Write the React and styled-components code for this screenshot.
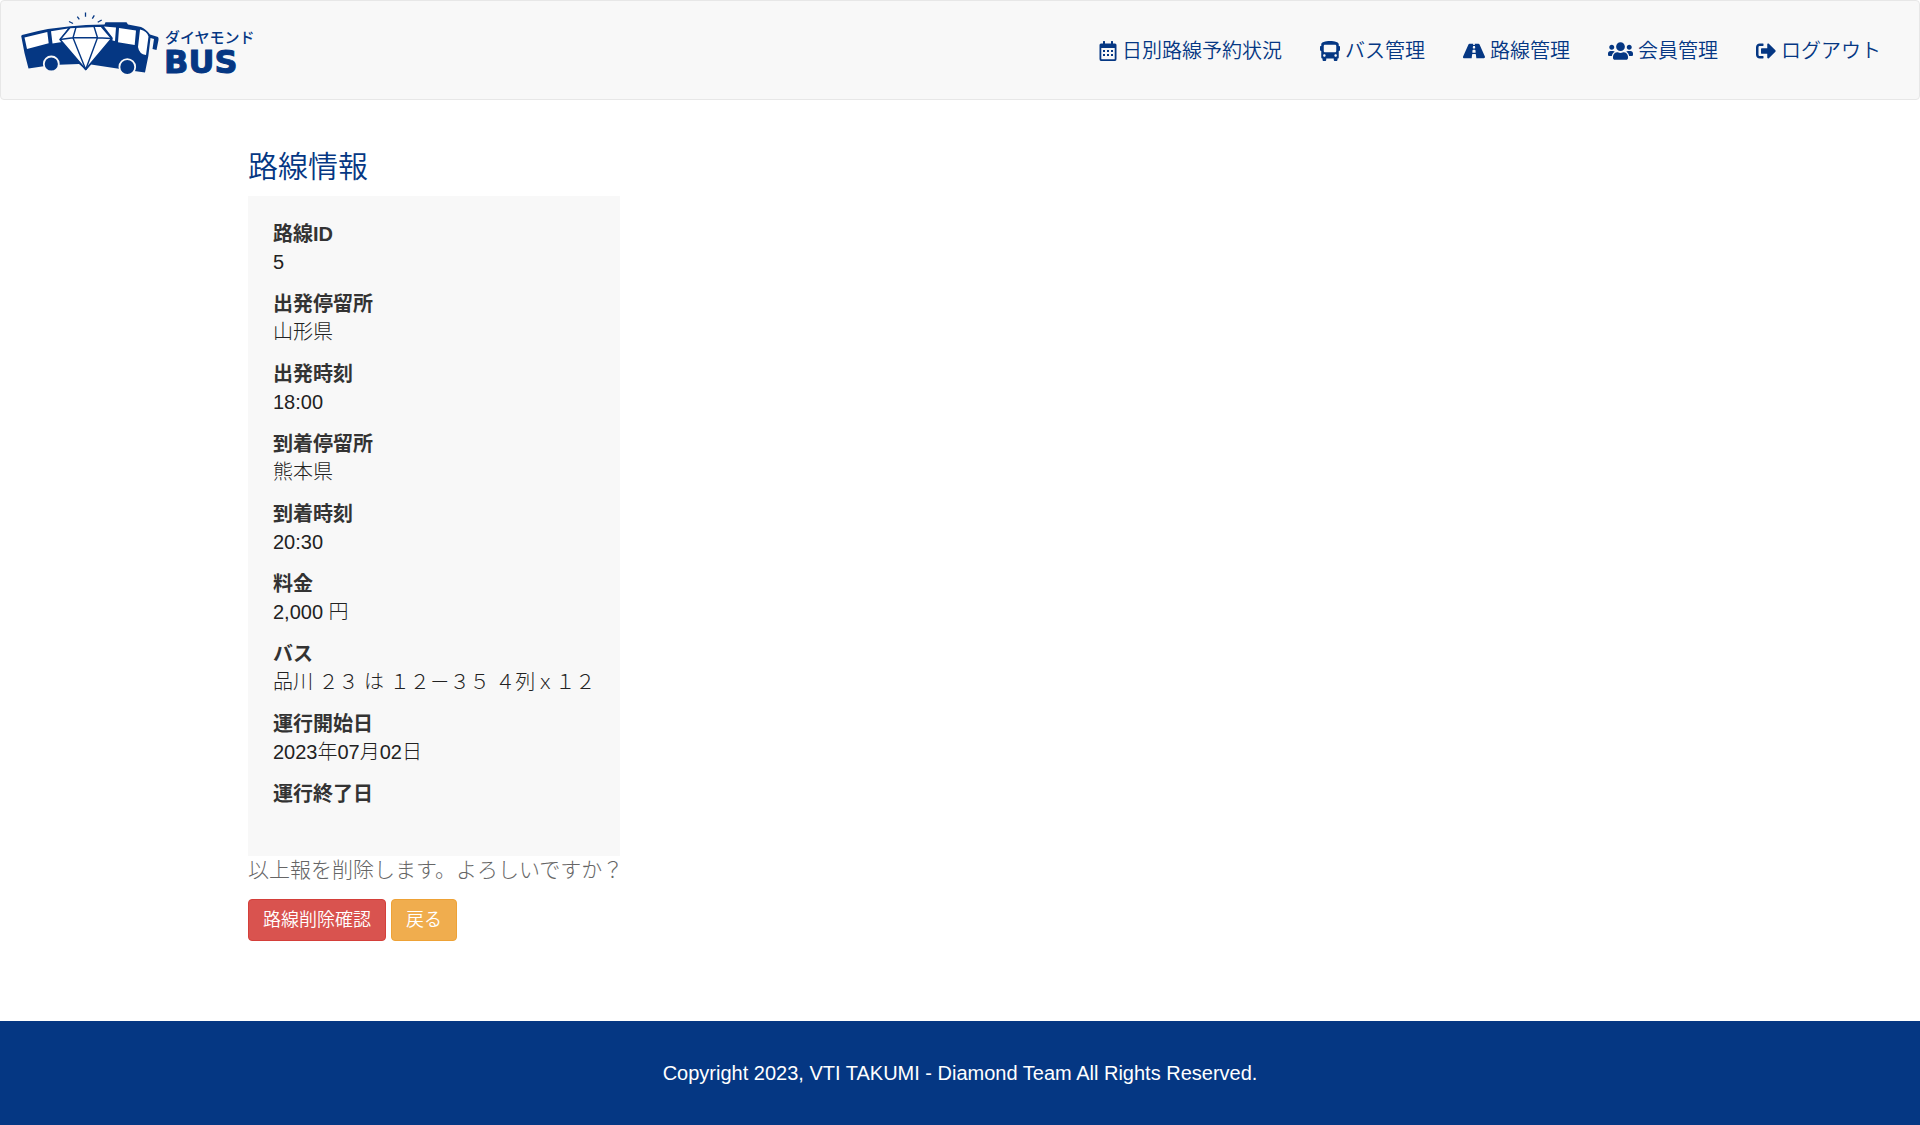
import React from "react";
import styled, { createGlobalStyle } from "styled-components";
import { FaBus, FaRoad, FaUsers, FaSignOutAlt } from "react-icons/fa";

const navy = "#053783";

const GlobalStyle = createGlobalStyle`
  *, *::before, *::after { box-sizing: border-box; }
  body {
    margin: 0;
    background: #fff;
    color: #333;
    font-family: "Liberation Sans", "Noto Sans CJK JP", sans-serif;
    font-size: 20px;
    font-weight: 350;
    line-height: 28px;
  }
`;

const Page = styled.div`
  display: flex;
  flex-direction: column;
  min-height: 100vh;
`;

const Header = styled.header`
  display: flex;
  justify-content: space-between;
  align-items: flex-start;
  padding: 7px 38px 15px 17px;
  background: #f8f8f8;
  border: 1px solid #e7e7e7;
  border-radius: 4px;
`;

const Brand = styled.a`
  display: block;
  svg { display: block; }
`;

const NavList = styled.ul`
  display: flex;
  gap: 38px;
  margin: 0;
  padding: 29px 0 0;
  list-style: none;
`;

const NavLink = styled.a`
  display: flex;
  align-items: center;
  gap: 5px;
  color: ${navy};
  text-decoration: none;
  white-space: nowrap;
  svg {
    flex: none;
    width: ${(p) => p.$iconWidth}px;
    height: 20px;
  }
`;

const Main = styled.main`
  flex: 1;
  width: 100%;
  max-width: 1424px;
  margin: 0 auto;
  padding: 50px 0 80px;
`;

const Title = styled.h1`
  margin: 0 0 12px;
  color: ${navy};
  font-size: 30px;
  font-weight: 350;
  line-height: 34px;
`;

const Details = styled.dl`
  width: fit-content;
  margin: 0;
  padding: 24px 25px 20px;
  background: #f8f8f8;
`;

const Term = styled.dt`
  font-weight: 700;
`;

const Value = styled.dd`
  min-height: 28px;
  margin: 0 0 14px;
  color: #222;
  font-weight: 300;
  &:last-child { margin: 0; }
`;

const Question = styled.p`
  margin: 0 0 15px;
  color: #666;
  font-size: 21px;
  font-weight: 300;
`;

const Actions = styled.div`
  display: flex;
  gap: 5px;
`;

const Button = styled.button`
  padding: 7px 14px;
  border: 1px solid ${(p) => p.$border};
  border-radius: 4px;
  background: ${(p) => p.$fill};
  color: #fff;
  font: inherit;
  font-size: 18px;
  line-height: 26px;
  cursor: pointer;
`;

const Footer = styled.footer`
  padding: 38px 20px;
  background: ${navy};
  color: #fff;
  text-align: center;
`;

function CalendarIcon(props) {
  return (
    <svg viewBox="0 0 18 20" fill={navy} {...props}>
      <path fillRule="evenodd" d="M4 0.500 Q4 0 4.500 0 H5.500 Q6 0 6 0.500 V2.500 H12 V0.500 Q12 0 12.500 0 H13.500 Q14 0 14 0.500 V2.500 H16 Q17.500 2.500 17.500 4 V18 Q17.500 20 16 20 H2 Q0.500 20 0.500 18 V4 Q0.500 2.500 2 2.500 H4 Z M2.300 7 V17.700 Q2.300 18.200 2.800 18.200 H15.200 Q15.700 18.200 15.700 17.700 V7 Z" />
      <path d="M4 9h2v2h-2z M8 9h2v2h-2z M12 9h2v2h-2z M4 13h2v2h-2z M8 13h2v2h-2z M12 13h2v2h-2z" />
    </svg>
  );
}

const links = [
  { label: "日別路線予約状況", Icon: CalendarIcon, width: 18 },
  { label: "バス管理", Icon: FaBus, width: 20 },
  { label: "路線管理", Icon: FaRoad, width: 22 },
  { label: "会員管理", Icon: FaUsers, width: 25 },
  { label: "ログアウト", Icon: FaSignOutAlt, width: 20 },
];

const details = [
  ["路線ID", "5"],
  ["出発停留所", "山形県"],
  ["出発時刻", "18:00"],
  ["到着停留所", "熊本県"],
  ["到着時刻", "20:30"],
  ["料金", "2,000 円"],
  ["バス", "品川 ２３ は １２－３５ ４列ｘ１２"],
  ["運行開始日", "2023年07月02日"],
  ["運行終了日", ""],
];

function Logo() {
  return (
    <svg width="240" height="76" viewBox="18 8 240 76" role="img" aria-label="ダイヤモンドBUS" fill={navy}>
      <path d="M22 35 Q50 27 86 25 L104.500 24.500 L105.500 22.300 H126.500 L128 24.500 L141 27 Q146 29 150 34.500 L158 37 Q158.800 38 158.500 40 L156.500 50 L152.500 49 L154 39 L150.500 38 Q149 56 145 72.500 L127 70 L91 64.500 L86 70 L79 64 L52 65 L28.500 68.500 Q24 53 21.200 36 Z" />
      <path fill="#fff" d="M24.500 37.500 L47.300 32 L48.700 43.300 L27 49 Z M51 31.200 L68 28.500 L60 39.500 L62 42 L52.500 43.500 Z M104 26.500 L116 27.500 L115 41 L112.500 40.500 L112.500 37.500 Z M119 28 L136 30.500 L134.700 45 L118 42.300 Z M140 29.500 Q147 31 148.500 36.500 L146 55 Q139 54 138 47 Z" />
      <path fill="#fff" stroke={navy} strokeWidth="1.600" strokeLinejoin="round" d="M70 27.500 L101 26 L111.700 38.500 L85.700 69.500 L60 39.500 Z" />
      <path fill="none" stroke={navy} strokeWidth="1.400" strokeLinejoin="round" d="M60 39.500 L73 37.800 H97.500 L111.700 38.500 M76 27.300 L73 37.800 L85.700 69.500 L97.500 37.800 L94 26.500" />
      <g stroke="#f8f8f8" strokeWidth="1.800">
        <circle cx="51.300" cy="64" r="7.500" />
        <circle cx="127.300" cy="67" r="7.900" />
      </g>
      <path fill="none" stroke={navy} strokeWidth="1.300" d="M69 21.500 L73 23.500 M77.300 16.700 L79.300 19.300 M85.500 12.500 V16.700 M94.300 15.300 L92.300 18.700 M101.700 20 L97.700 22.300" />
      <text x="165" y="43" fontFamily="'Noto Sans CJK JP', sans-serif" fontSize="15" fontWeight="500">ダイヤモンド</text>
      <text x="164" y="73" fontFamily="'DejaVu Sans', sans-serif" fontSize="32" fontWeight="700" stroke={navy} strokeWidth="1">BUS</text>
    </svg>
  );
}

export default function App() {
  return (
    <Page lang="ja">
      <GlobalStyle />
      <Header>
        <Brand href="#"><Logo /></Brand>
        <nav>
          <NavList>
            {links.map(({ label, Icon, width }) => (
              <li key={label}>
                <NavLink href="#" $iconWidth={width}><Icon aria-hidden="true" />{label}</NavLink>
              </li>
            ))}
          </NavList>
        </nav>
      </Header>
      <Main>
        <Title>路線情報</Title>
        <Details>
          {details.map(([term, value]) => (
            <React.Fragment key={term}>
              <Term>{term}</Term>
              <Value>{value}</Value>
            </React.Fragment>
          ))}
        </Details>
        <Question>以上報を削除します。よろしいですか？</Question>
        <Actions>
          <Button type="button" $fill="#d9534f" $border="#d43f3a">路線削除確認</Button>
          <Button type="button" $fill="#f0ad4e" $border="#eea236">戻る</Button>
        </Actions>
      </Main>
      <Footer>Copyright 2023, VTI TAKUMI - Diamond Team All Rights Reserved.</Footer>
    </Page>
  );
}
